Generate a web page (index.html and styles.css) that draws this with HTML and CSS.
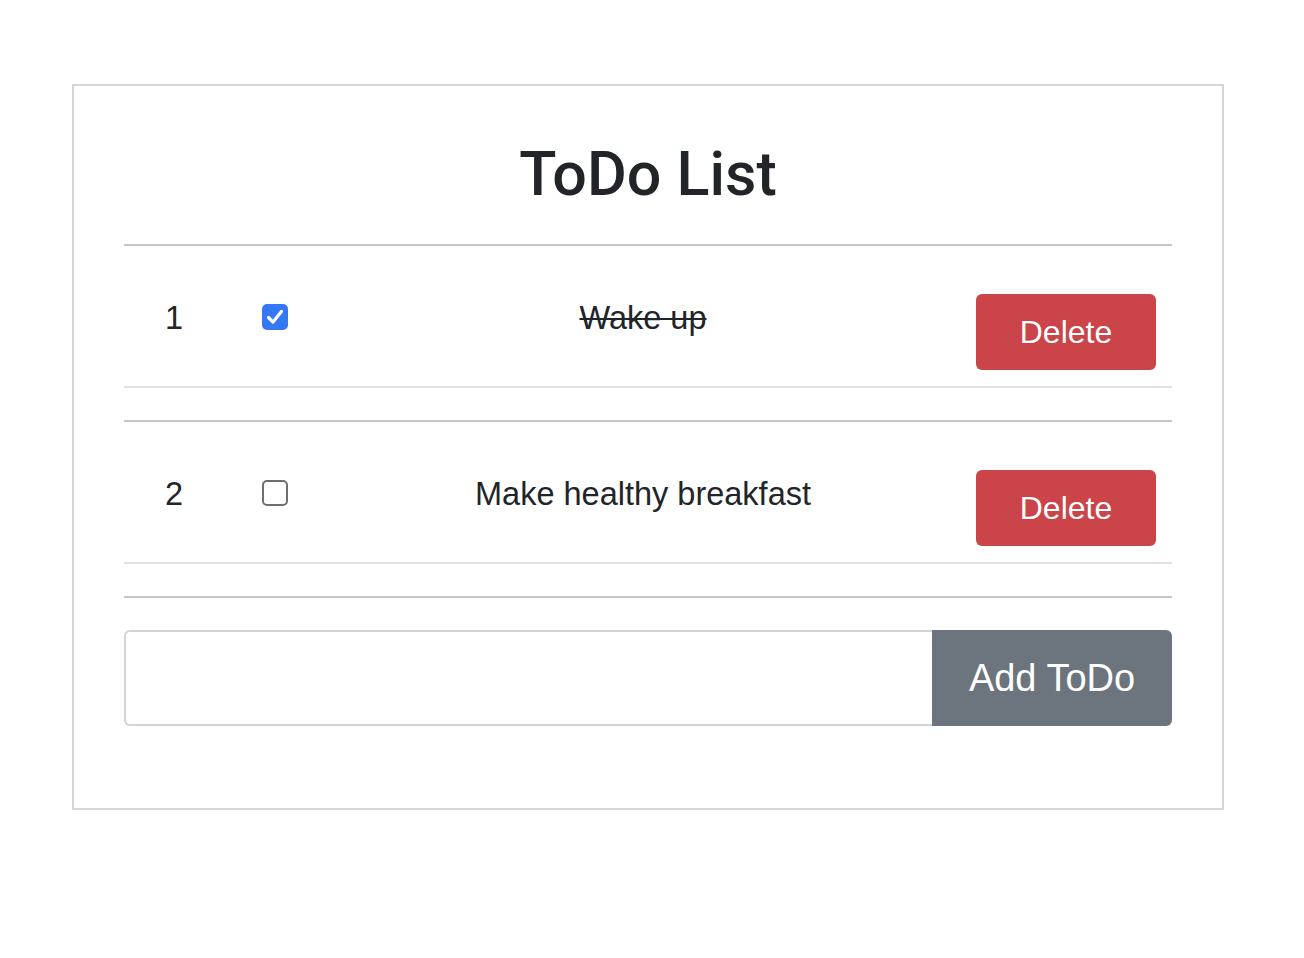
FILE: index.html
```html
<!DOCTYPE html>
<html lang="en">
<head>
<meta charset="utf-8">
<title>ToDo List</title>
<link rel="stylesheet" href="styles.css">
</head>
<body>
<div class="page">
  <div class="card">
    <h1 class="title">ToDo List</h1>

    <div class="todo-item">
      <div class="todo-row">
        <div class="cell num">1</div>
        <div class="cell check"><input type="checkbox" class="box" checked></div>
        <div class="cell text done">Wake up</div>
        <div class="cell action"><button class="btn-delete">Delete</button></div>
      </div>
    </div>

    <div class="todo-item">
      <div class="todo-row">
        <div class="cell num">2</div>
        <div class="cell check"><input type="checkbox" class="box"></div>
        <div class="cell text">Make healthy breakfast</div>
        <div class="cell action"><button class="btn-delete">Delete</button></div>
      </div>
    </div>

    <div class="divider"></div>

    <div class="add-group">
      <input type="text" class="add-input">
      <button class="btn-add">Add ToDo</button>
    </div>
  </div>
</div>
</body>
</html>
```

FILE: styles.css
```css
html, body {
  margin: 0;
  padding: 0;
  background: #ffffff;
}

body {
  font-family: "Liberation Sans", Arial, Helvetica, sans-serif;
  color: #212529;
}

.page {
  padding: 84px 0 0 72px;
}

.card {
  width: 1048px;
  padding: 50px;
  border: 2px solid #d3d6d9;
}

.title {
  margin: 2px 0 34px;
  font-family: Roboto, "Liberation Sans", Arial, sans-serif;
  font-size: 61px;
  line-height: 72px;
  font-weight: 500;
  text-align: center;
  color: #212529;
}

.todo-item {
  border-top: 2px solid #c8c8c8;
  margin-bottom: 32px;
}

.todo-row {
  display: grid;
  grid-template-columns: 100px 102px 1fr 212px;
  align-items: start;
  padding: 48px 0 16px;
  border-bottom: 2px solid #dee2e6;
  box-sizing: content-box;
  height: 76px;
}

.cell {
  font-size: 32.5px;
  line-height: 48px;
  text-align: center;
}

.check {
  display: flex;
  justify-content: center;
  align-items: center;
  height: 48px;
}

.box {
  appearance: none;
  -webkit-appearance: none;
  width: 26px;
  height: 26px;
  margin: -2px 0 0 0;
  box-sizing: border-box;
  border: 2px solid #6f6f6f;
  border-radius: 5px;
  background: #ffffff;
}

.box:checked {
  border: none;
  background-color: #3478f6;
  background-image: url("data:image/svg+xml,%3Csvg xmlns='http://www.w3.org/2000/svg' viewBox='0 0 26 26'%3E%3Cpath d='M6.5 13.5 L11 18 L19.5 7.5' fill='none' stroke='white' stroke-width='3.2' stroke-linecap='round' stroke-linejoin='round'/%3E%3C/svg%3E");
  background-size: 26px 26px;
}

.done {
  text-decoration: line-through;
  text-decoration-thickness: 2px;
}

.action {
  display: flex;
  justify-content: flex-end;
  padding-right: 16px;
}

.btn-delete {
  width: 180px;
  height: 76px;
  border: none;
  border-radius: 6px;
  background: #cb444a;
  color: #ffffff;
  font-family: "Liberation Sans", Arial, Helvetica, sans-serif;
  font-size: 32px;
  line-height: 48px;
  padding: 0;
}

.divider {
  border-top: 2px solid #c8c8c8;
  margin-bottom: 32px;
}

.add-group {
  display: flex;
  height: 96px;
  margin-bottom: 32px;
}

.add-input {
  flex: 1;
  height: 96px;
  box-sizing: border-box;
  border: 2px solid #ced4da;
  border-right: none;
  border-radius: 6px 0 0 6px;
  margin: 0;
  padding: 0 24px;
  font-size: 32px;
  font-family: "Liberation Sans", Arial, Helvetica, sans-serif;
  outline: none;
}

.btn-add {
  width: 240px;
  height: 96px;
  border: none;
  border-radius: 0 6px 6px 0;
  background: #6c757d;
  color: #ffffff;
  font-family: "Liberation Sans", Arial, Helvetica, sans-serif;
  font-size: 38px;
  padding: 0;
  margin: 0;
}
```
